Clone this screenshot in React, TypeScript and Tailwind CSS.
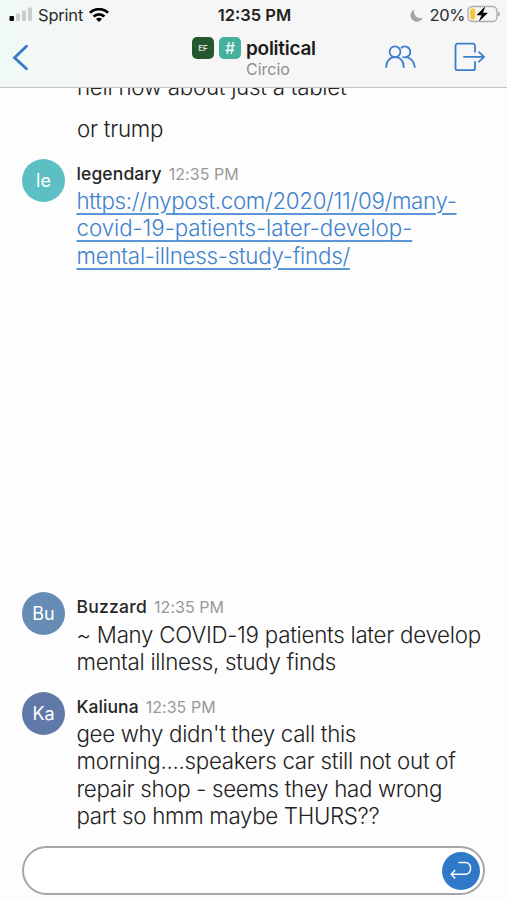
import type { ReactNode } from "react";

interface MessageProps {
  initials: string;
  color: string;
  name: string;
  nameClass: string;
  time: string;
  className?: string;
  children: ReactNode;
}

function StatusBar() {
  return (
    <div className="grid h-[30px] grid-cols-3 items-center pl-[9px] pr-[7px] text-[16.5px] text-[#2b2b2b]">
      <div className="flex items-center">
        <svg width="24" height="16" viewBox="0 0 24 16" className="mr-[5px]">
          <rect x="0.5" y="9" width="4.5" height="5" rx="1" fill="#000" />
          <rect x="7" y="6.5" width="4" height="7.5" rx="1" fill="#ccc" />
          <rect x="13" y="3.5" width="4" height="10.5" rx="1" fill="#ccc" />
          <rect x="19" y="0.5" width="4" height="13.5" rx="1" fill="#ccc" />
        </svg>
        <span className="mr-[6px] tracking-[-0.2px]">Sprint</span>
        <svg width="20" height="15" viewBox="0 0 20 15" fill="none" stroke="#000" strokeWidth="2.8">
          <path d="M1 4.8C6 0 14 0 19 4.8" />
          <path d="M4.6 8.6c3-3 7.8-3 10.8 0" />
          <path d="M10 14l-3-3c1.6-1.6 4.4-1.6 6 0z" fill="#000" stroke="none" />
        </svg>
      </div>
      <span className="whitespace-nowrap text-center font-semibold text-[#222]">12:35 PM</span>
      <div className="flex items-center justify-end">
        <svg width="13" height="13" viewBox="0 0 13 13" className="mr-[7px]">
          <path d="M4.5 .5A6.3 6.3 0 1 0 12.7 8.6 6.2 6.2 0 0 1 4.5 .5z" fill="#a4a4a4" />
        </svg>
        <span className="mr-[2px] tracking-[-0.4px]">20%</span>
        <svg width="33" height="18" viewBox="0 0 33 18" className="-mt-[2px]">
          <rect x="1" y="1.5" width="29" height="15" rx="4.5" fill="none" stroke="#aaa" strokeWidth="1.3" />
          <rect x="3.2" y="3.5" width="5" height="11" rx="2" fill="#f3c634" />
          <path d="M31 6.5c2.5 1 2.5 4 0 5z" fill="#aaa" />
          <path d="M18.5 1L9.5 10.2h5L11.5 17l9.5-9.3h-5z" fill="#000" stroke="#f7f7f7" strokeWidth="1" paintOrder="stroke" />
        </svg>
      </div>
    </div>
  );
}

function Header() {
  return (
    <header className="h-[88px] shrink-0 border-b border-[#c4c4c4] bg-[#f6f6f6] bg-linear-to-r from-[#f0f9f6] to-[#f6f6f6] to-25%">
      <StatusBar />
      <div className="grid h-[57px] grid-cols-[192px_1fr_123px]">
        <button className="flex items-start pl-[12px] pt-[14px]" aria-label="Back">
          <svg width="17" height="27" viewBox="0 0 17 27" fill="none" stroke="#3478c6" strokeWidth="2.8" strokeLinecap="round">
            <path d="M14.5 2.3L2.5 13.7l12 11" />
          </svg>
        </button>
        <div className="flex pt-[5px]">
          <span className="mt-[2px] mr-[5px] flex size-[22px] shrink-0 items-center justify-center rounded-[5px] bg-[#25582f] text-[8px] font-semibold text-[#dbe6dc]">
            EF
          </span>
          <span className="mt-[2px] mr-[5px] flex size-[22px] shrink-0 items-center justify-center rounded-[5px] bg-[#45b09c] text-[16px] text-white">
            #
          </span>
          <div className="flex flex-col">
            <h1 className="pt-[1px] text-[19px] leading-[25px] font-semibold tracking-[-0.27px] text-[#1c1c1c]">political</h1>
            <span className="text-[16px] leading-[17px] text-[#8e8e8e]">Circio</span>
          </div>
        </div>
        <div className="flex items-start pt-[12px]">
          <svg width="32" height="28" viewBox="0 0 32 28" fill="none" stroke="#3a7fcc" strokeWidth="1.8" strokeLinecap="round" className="mr-[38px]">
            <circle cx="11" cy="9.8" r="5.4" />
            <path d="M2.2 25c0-5.800 3.600-9.800 8.800-9.800s8.800 4 8.800 9.800" />
            <path d="M17.500 5.700a5.400 5.400 0 1 1 1.600 9.300" />
            <path d="M23.500 15.300c4 1.200 6.500 4.800 7.300 9.700" />
          </svg>
          <svg width="32" height="31" viewBox="0 0 32 31" fill="none" stroke="#3a7fcc" strokeWidth="1.8" strokeLinecap="round" strokeLinejoin="round">
            <path d="M21 9.800V3.700a2 2 0 0 0-2-2H3.500a2 2 0 0 0-2 2v22.500a2 2 0 0 0 2 2H19a2 2 0 0 0 2-2v-6.300" />
            <path d="M10 14.900h20M25 10.100l5.100 4.800-5.100 4.800" />
          </svg>
        </div>
      </div>
    </header>
  );
}

function Message({ initials, color, name, nameClass, time, className = "", children }: MessageProps) {
  return (
    <article className={`flex pl-[22px] ${className}`}>
      <div className={`mr-[12px] flex size-[43px] shrink-0 items-center justify-center rounded-full text-[18px] text-white ${color}`}>
        {initials}
      </div>
      <div className="-ml-[0.5px]">
        <div className="flex h-[29px] items-baseline gap-[7px] pt-[1px] leading-[28px]">
          <span className={`text-[17.5px] font-medium text-[#262626] ${nameClass}`}>{name}</span>
          <time className="text-[16px] tracking-[0.05px] text-[#999]">{time}</time>
        </div>
        <div className="-mt-[0.5px] text-[22.3px] leading-[27.3px] font-light whitespace-nowrap text-[#222]">{children}</div>
      </div>
    </article>
  );
}

export default function App() {
  return (
    <div className="flex h-[900px] w-[507px] flex-col overflow-hidden bg-[#fdfdfd] font-['Inter',sans-serif]">
      <Header />

      <main className="flex-1 overflow-hidden">
        <div className="-mt-[15px] pl-[77px] text-[22.3px] leading-[27.3px] font-light text-[#222]">
          <p className="tracking-[-0.26px]">hell now about just a tablet</p>
          <p className="mt-[15px] tracking-[-0.25px]">or trump</p>
        </div>

        <Message initials="le" color="bg-[#5bbfc3]" name="legendary" nameClass="tracking-[0.11px]" time="12:35 PM" className="mt-[16px]">
          <a className="text-[#3d82cc] underline decoration-[#5b96d6] decoration-2 underline-offset-[3.5px]">
            <span className="tracking-[-0.31px]">https://nypost.com/2020/11/09/many-</span>
            <br />
            <span className="tracking-[-0.05px]">covid-19-patients-later-develop-</span>
            <br />
            <span className="tracking-[-0.23px]">mental-illness-study-finds/</span>
          </a>
        </Message>

        <Message initials="Bu" color="bg-[#668bb5]" name="Buzzard" nameClass="tracking-[0.25px]" time="12:35 PM" className="mt-[323.5px]">
          <p className="tracking-[-0.26px]">~ Many COVID-19 patients later develop</p>
          <p className="tracking-[-0.3px]">mental illness, study finds</p>
        </Message>

        <Message initials="Ka" color="bg-[#6079a8]" name="Kaliuna" nameClass="tracking-[0.05px]" time="12:35 PM" className="mt-[16px]">
          <p className="tracking-[-0.32px]">gee why didn't they call this</p>
          <p className="tracking-[-0.27px]">morning....speakers car still not out of</p>
          <p className="tracking-[-0.31px]">repair shop - seems they had wrong</p>
          <p className="tracking-[-0.31px]">part so hmm maybe THURS??</p>
        </Message>
      </main>

      <footer className="h-[54px] shrink-0 px-[22px]">
        <div className="flex h-[49px] items-center justify-end rounded-full border-2 border-[#a6a6a6] bg-white pr-[3px]">
          <input className="min-w-0 flex-1 bg-transparent pl-5 outline-none" aria-label="Message" />
          <button className="flex size-[38px] items-center justify-center rounded-full bg-[#2f79c8]" aria-label="Send">
            <svg width="22" height="19" viewBox="0 0 22 19" fill="none" stroke="#fff" strokeWidth="1.5" strokeLinecap="round" strokeLinejoin="round">
              <path d="M9 1.5h6.5a5 5 0 0 1 5 5v1.8a5 5 0 0 1-5 5H1.5" />
              <path d="M4.8 9.5l-3.600 3.800 3.600 3.800" />
            </svg>
          </button>
        </div>
      </footer>
    </div>
  );
}
